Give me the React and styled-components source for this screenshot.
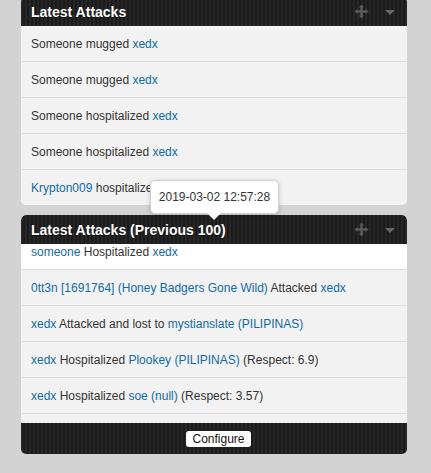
import { useLayoutEffect, useRef } from 'react';
import styled, { createGlobalStyle } from 'styled-components';

const GlobalStyle = createGlobalStyle`
  html, body {
    margin: 0;
    padding: 0;
    background: #d3d3d3;
    font-family: "Liberation Sans", Arial, sans-serif;
    overflow: hidden;
  }
`;

const stripes = `repeating-linear-gradient(90deg, #272727 0px, #272727 2px, #1b1b1b 2px, #1b1b1b 4px)`;

// 최근 공격 목록
const latest = [
  [{ t: 'Someone mugged ' }, { t: 'xedx', link: true }],
  [{ t: 'Someone mugged ' }, { t: 'xedx', link: true }],
  [{ t: 'Someone hospitalized ' }, { t: 'xedx', link: true }],
  [{ t: 'Someone hospitalized ' }, { t: 'xedx', link: true }],
  [{ t: 'Krypton009', link: true }, { t: ' hospitalized ' }, { t: 'xedx', link: true }],
];

// 이전 100개 (스크롤됨, 마지막 줄은 푸터에 가려짐)
const previous = [
  [{ t: 'someone', link: true }, { t: ' Hospitalized ' }, { t: 'xedx', link: true }],
  [{ t: '0tt3n [1691764] (Honey Badgers Gone Wild)', link: true }, { t: ' Attacked ' }, { t: 'xedx', link: true }],
  [{ t: 'xedx', link: true }, { t: ' Attacked and lost to ' }, { t: 'mystianslate (PILIPINAS)', link: true }],
  [{ t: 'xedx', link: true }, { t: ' Hospitalized ' }, { t: 'Plookey (PILIPINAS)', link: true }, { t: ' (Respect: 6.9)' }],
  [{ t: 'xedx', link: true }, { t: ' Hospitalized ' }, { t: 'soe (null)', link: true }, { t: ' (Respect: 3.57)' }],
  [],
];

function MoveIcon() {
  return (
    <svg width="15" height="15" viewBox="0 0 15 15">
      <path
        d="M7.5 0.5 L10 3.5 L8.8 3.5 L8.8 6.2 L11.5 6.2 L11.5 5 L14.5 7.5 L11.5 10 L11.5 8.8 L8.8 8.8 L8.8 11.5 L10 11.5 L7.5 14.5 L5 11.5 L6.2 11.5 L6.2 8.8 L3.5 8.8 L3.5 10 L0.5 7.5 L3.5 5 L3.5 6.2 L6.2 6.2 L6.2 3.5 L5 3.5 Z"
        fill="#5e5e5e"
        stroke="#3a3a3a"
        strokeWidth="0.6"
      />
    </svg>
  );
}

function Header({ title, rounded }) {
  return (
    <HeaderBar rounded={rounded}>
      <Title>{title}</Title>
      <Tools>
        <MoveIcon />
        <Caret />
      </Tools>
    </HeaderBar>
  );
}

function Row({ parts, highlight }) {
  return (
    <ItemRow highlight={highlight}>
      {parts.map((p, i) => (p.link ? <Link key={i}>{p.t}</Link> : <span key={i}>{p.t}</span>))}
    </ItemRow>
  );
}

export default function App() {
  const scrollRef = useRef(null);

  useLayoutEffect(() => {
    if (scrollRef.current) scrollRef.current.scrollTop = 10;
  }, []);

  return (
    <>
      <GlobalStyle />
      <Page>
        <Panel>
          <Header title="Latest Attacks" />
          <List>
            {latest.map((parts, i) => (
              <Row key={i} parts={parts} />
            ))}
          </List>
        </Panel>

        <Tooltip>2019-03-02 12:57:28</Tooltip>

        <Panel>
          <Header title="Latest Attacks (Previous 100)" rounded />
          <List ref={scrollRef}>
            {previous.map((parts, i) => (
              <Row key={i} parts={parts} highlight={i === 0} />
            ))}
          </List>
          <Footer>
            <ConfigButton>Configure</ConfigButton>
          </Footer>
        </Panel>
      </Page>
    </>
  );
}

const Page = styled.div`
  position: relative;
  display: flex;
  flex-direction: column;
  gap: 10px;
  width: 386px;
  margin: -3px 0 0 21px;
`;

const Panel = styled.div`
  display: flex;
  flex-direction: column;
  border-radius: 5px;
  overflow: hidden;
  background: #f2f2f2;
`;

const HeaderBar = styled.div`
  display: flex;
  align-items: center;
  justify-content: space-between;
  height: 29px;
  padding: 0 12px 0 10px;
  background: ${stripes};
  border-radius: ${(p) => (p.rounded ? '5px 5px 0 0' : '0')};
`;

const Title = styled.div`
  color: #fff;
  font-size: 14px;
  font-weight: bold;
  text-shadow: 0 1px 1px rgba(0, 0, 0, 0.6);
`;

const Tools = styled.div`
  display: flex;
  align-items: center;
  gap: 16px;
`;

const Caret = styled.span`
  width: 0;
  height: 0;
  border-left: 5px solid transparent;
  border-right: 5px solid transparent;
  border-top: 5px solid #666;
  margin-top: 1px;
`;

const List = styled.div`
  height: 179px;
  overflow: hidden;
`;

const ItemRow = styled.div`
  display: flex;
  align-items: center;
  height: 35px;
  padding: 0 10px;
  border-bottom: 1px solid #dcdcdc;
  background: ${(p) => (p.highlight ? '#fff' : '#f2f2f2')};
  color: #333;
  font-size: 12px;
  white-space: pre;
`;

const Link = styled.span`
  color: #106ca6;
`;

const Footer = styled.div`
  display: flex;
  align-items: center;
  justify-content: center;
  height: 31px;
  padding-left: 9px;
  background: ${stripes};
`;

const ConfigButton = styled.button`
  height: 16px;
  padding: 0 6px;
  border: none;
  border-radius: 3px;
  background: #fff;
  color: #111;
  font-family: "Liberation Sans", Arial, sans-serif;
  font-size: 12px;
  line-height: 16px;
`;

const Tooltip = styled.div`
  position: absolute;
  left: 129px;
  top: 183px;
  width: 127px;
  height: 32px;
  display: flex;
  align-items: center;
  justify-content: center;
  background: #fff;
  border: 1px solid #d0d0d0;
  border-radius: 5px;
  box-shadow: 0 1px 4px rgba(0, 0, 0, 0.2);
  color: #333;
  font-size: 12px;

  &::after {
    content: '';
    position: absolute;
    left: 56px;
    bottom: -7px;
    border-left: 7px solid transparent;
    border-right: 7px solid transparent;
    border-top: 7px solid #fff;
  }
`;
